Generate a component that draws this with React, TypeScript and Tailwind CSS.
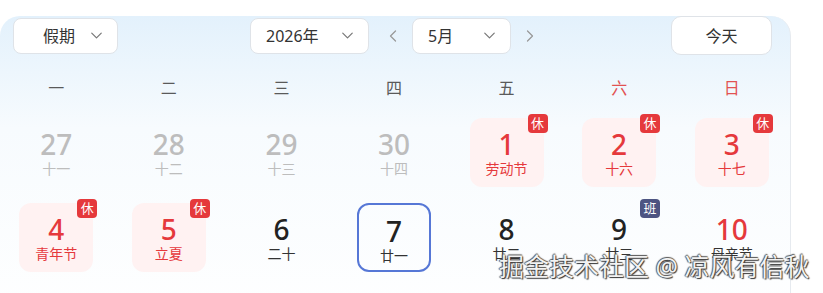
import React from 'react';
import { ChevronDown, ChevronLeft, ChevronRight } from 'lucide-react';

type Day = {
  num: number;
  sub: string;
  muted?: boolean;
  red?: boolean;
  holiday?: boolean;
  badge?: '休' | '班';
  today?: boolean;
};

const weekDays = ['一', '二', '三', '四', '五', '六', '日'];

const rows: Day[][] = [
  [
    { num: 27, sub: '十一', muted: true },
    { num: 28, sub: '十二', muted: true },
    { num: 29, sub: '十三', muted: true },
    { num: 30, sub: '十四', muted: true },
    { num: 1, sub: '劳动节', red: true, holiday: true, badge: '休' },
    { num: 2, sub: '十六', red: true, holiday: true, badge: '休' },
    { num: 3, sub: '十七', red: true, holiday: true, badge: '休' },
  ],
  [
    { num: 4, sub: '青年节', red: true, holiday: true, badge: '休' },
    { num: 5, sub: '立夏', red: true, holiday: true, badge: '休' },
    { num: 6, sub: '二十' },
    { num: 7, sub: '廿一', today: true },
    { num: 8, sub: '廿二' },
    { num: 9, sub: '廿三', badge: '班' },
    { num: 10, sub: '母亲节', red: true },
  ],
];

const Select = ({ label, width, textPad }: { label: string; width: string; textPad: string }) => (
  <div
    className={`${width} h-[36px] flex items-center justify-between bg-white border border-[#dfe3e8] rounded-[8px] ${textPad} pr-[11px]`}
  >
    <span className="text-[16px] text-[#333]">{label}</span>
    <ChevronDown className="w-[19px] h-[19px] text-[#777]" strokeWidth={1.5} />
  </div>
);

const DayCell = ({ day }: { day: Day }) => {
  const numColor = day.muted ? 'text-[#bdbdbd]' : day.red ? 'text-[#e5393c]' : 'text-[#222]';
  const subColor = day.muted
    ? 'text-[#bdbdbd]'
    : day.holiday
      ? 'text-[#e5393c]'
      : 'text-[#333]';
  const boxStyle = day.today
    ? 'border-2 border-[#5677d6] rounded-[12px]'
    : day.holiday
      ? 'bg-[#fff2f2] rounded-[12px]'
      : '';

  return (
    <div className="flex justify-center pt-[15px]">
      <div className={`relative w-[74px] h-[69px] flex flex-col items-center pt-[10px] ${boxStyle}`}>
        <span className={`text-[28px] leading-[32px] font-medium ${numColor}`}>{day.num}</span>
        <span className={`text-[14px] leading-[18px] ${subColor}`}>{day.sub}</span>
        {day.badge && (
          <span
            className={`absolute -top-[4px] -right-[4px] w-[20px] h-[19px] rounded-[4px] flex items-center justify-center text-[13px] leading-none text-white ${
              day.badge === '休' ? 'bg-[#e5393c]' : 'bg-[#4d5482]'
            }`}
          >
            {day.badge}
          </span>
        )}
      </div>
    </div>
  );
};

export default function App() {
  return (
    <div
      className="relative w-[823px] h-[293px] overflow-hidden bg-white"
      style={{ fontFamily: '"Noto Sans", "Noto Sans CJK SC", sans-serif' }}
    >
      <div className="w-[791px] h-[320px] rounded-t-[20px] border-r border-[#e6eaef] bg-gradient-to-b from-[#e3f1fc] via-[#f7fbfe] via-35% to-white">
        {/* 工具栏 */}
        <div className="flex items-center h-[39px] mt-[16px] pl-[13px]">
          <Select label="假期" width="w-[105px]" textPad="pl-[29px]" />
          <div className="ml-[132px]">
            <Select label="2026年" width="w-[119px]" textPad="pl-[15px]" />
          </div>
          <ChevronLeft className="ml-[14px] w-[20px] h-[20px] text-[#999]" strokeWidth={1.5} />
          <div className="ml-[9px]">
            <Select label="5月" width="w-[99px]" textPad="pl-[15px]" />
          </div>
          <ChevronRight className="ml-[9px] w-[20px] h-[20px] text-[#999]" strokeWidth={1.5} />
          <div className="ml-[131px] w-[101px] h-[39px] flex items-center justify-center bg-white border border-[#dfe3e8] rounded-[10px] text-[16px] text-[#333]">
            今天
          </div>
        </div>

        {/* 星期 */}
        <div className="grid grid-cols-7 w-[788px] mt-[18px] h-[30px] items-center">
          {weekDays.map((w, i) => (
            <div
              key={w}
              className={`text-center text-[16px] ${i >= 5 ? 'text-[#e25252]' : 'text-[#5a5a5a]'}`}
            >
              {w}
            </div>
          ))}
        </div>

        {/* 日期 */}
        {rows.map((row, r) => (
          <div key={r} className="grid grid-cols-7 w-[788px] h-[85px]">
            {row.map((d) => (
              <DayCell key={d.num} day={d} />
            ))}
          </div>
        ))}
      </div>

      {/* 水印 */}
      <div
        className="absolute left-[499px] top-[249px] text-[25px] leading-[34px] text-[#f2f2f2] whitespace-nowrap"
        style={{ textShadow: '1px 1px 1px #333, -1px 0 1px #555, 0 -1px 1px #555' }}
      >
        掘金技术社区 @ 凉风有信秋
      </div>
    </div>
  );
}
